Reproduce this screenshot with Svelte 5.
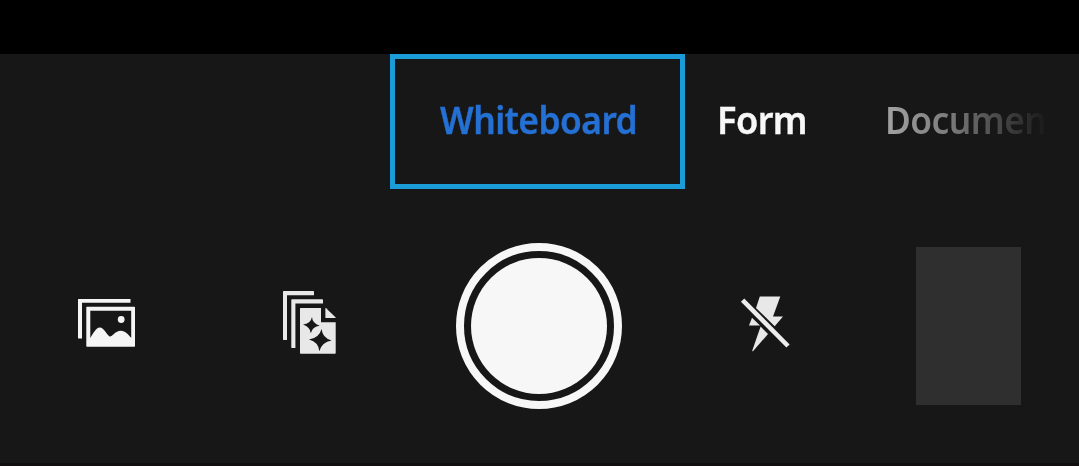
<script lang="ts">
    const modes = [
        { id: "whiteboard", label: "Whiteboard" },
        { id: "form", label: "Form" },
        { id: "document", label: "Documen" },
    ];

    let selected = $state("whiteboard");
</script>

<div class="camera">
    <div class="preview"></div>
    <nav class="modes">
        {#each modes as mode}
            <button
                class="mode {mode.id}"
                class:selected={selected === mode.id}
                onclick={() => (selected = mode.id)}
            >
                <span>{mode.label}</span>
            </button>
        {/each}
    </nav>
    <div class="controls">
        <button class="control" aria-label="Gallery">
            <svg width="58" height="70" viewBox="0 -8 58 70">
                <path d="M.5 0H52.5V3.7H4V39.5H.5Q0 39.5 0 39V.5Q0 0 .5 0Z" />
                <path
                    fill-rule="evenodd"
                    d="M9 7.7H56.3Q57 7.7 57 8.4V47Q57 47.7 56.3 47.7H9Q8.3 47.7 8.3 47V8.4Q8.3 7.7 9 7.7ZM12.3 11.7V39C15 35 18 28.6 21.8 28.6C26 28.6 29 36 31.5 37.5C34 38.3 37 31.7 42.8 31.7C47.5 31.7 50.5 36 53.2 38.7V11.7Z"
                />
                <circle cx="43.2" cy="20.5" r="3.4" />
            </svg>
        </button>
        <button class="control" aria-label="Auto capture">
            <svg class="soft" width="54" height="70" viewBox="0 0 54 70">
                <path d="M.7 0H30.3Q31 0 31 .7V4.2H4V49H.7Q0 49 0 48.3V.7Q0 0 .7 0Z" />
                <path d="M9 8.3H39.3Q40 8.3 40 9V12.6H12.4V57H9Q8.3 57 8.3 56.3V9Q8.3 8.3 9 8.3Z" />
                <path
                    fill-rule="evenodd"
                    d="M17.7 17H38V31.2H52.7V62Q52.7 62.7 52 62.7H17.7Q17 62.7 17 62V17.7Q17 17 17.7 17ZM29 26Q29.2 32 36.7 34.7Q29.5 35.2 27.8 42.3Q27.3 36 20 33.5Q27.6 33 29 26ZM38.6 38Q39.4 47 48.6 49.4Q38.8 51 36.3 60.2Q35.7 51 26 48.4Q36 47.2 38.6 38Z"
                />
                <path d="M42.4 17.4Q42.4 16.6 43.1 17.2L52.5 26.3Q53 27 52.3 27H43Q42.4 27 42.4 26.4Z" />
            </svg>
        </button>
        <button class="shutter" aria-label="Take photo"></button>
        <button class="control" aria-label="Flash off">
            <svg class="soft" width="50" height="60" viewBox="0 0 50 60">
                <path d="M19.8.4H40.3L33 20.5H43L34.7 30.3L16 12Z" />
                <path d="M12 21.7L20 29.5H9Z" />
                <path d="M20.6 30.5L28 38L13.2 55Q12.2 55.8 12.3 54.5Z" />
                <path class="slash" d="M2.6 4.2L48 50" />
            </svg>
        </button>
        <div class="thumbnail"></div>
    </div>
</div>

<style>
    :global(body) {
        margin: 0;
        background-color: #171717;
    }

    .camera {
        box-sizing: border-box;
        width: 1079px;
        height: 466px;
        overflow: hidden;
        background-color: #171717;
        border-bottom: 3px solid #120e10;
        font-family: "Noto Sans", "Open Sans", sans-serif;
    }

    button {
        padding: 0;
        border: none;
        background: none;
        font: inherit;
        color: inherit;
    }

    .preview {
        height: 54px;
        background-color: #000;
    }

    .modes {
        display: flex;
        height: 135px;
        padding-left: 390px;
    }

    .mode {
        box-sizing: border-box;
        display: flex;
        align-items: center;
        font-size: 37.5px;
        font-weight: 600;
        line-height: 50px;
        letter-spacing: -0.6px;
        white-space: nowrap;
        color: #f7f7f7;
        -webkit-text-stroke: 0.4px currentColor;
    }

    .mode span {
        padding-bottom: 4px;
        transform: scaleX(0.943);
        transform-origin: left;
    }

    .whiteboard {
        width: 295px;
        padding-left: 45px;
        border: 5px solid #1b9bd7;
    }

    .selected {
        color: #2470d4;
    }

    .form {
        width: 200px;
        padding-left: 32px;
    }

    .form span {
        transform: scaleX(0.965);
    }

    .document {
        width: 170px;
        -webkit-text-stroke: 0;
    }

    .document span {
        color: transparent;
        background: linear-gradient(90deg, #a3a3a3, #7b7b7b 40%, #3c3c3c 78%, #191919);
        background-clip: text;
    }

    .controls {
        display: grid;
        grid-template-columns: 205px 173px 284px 176px 105px;
        align-items: center;
        height: 166px;
        padding: 54px 0 0 78px;
    }

    .control {
        display: flex;
        fill: #f5f5f5;
    }

    .soft {
        fill: #e8e8e8;
    }

    .slash {
        stroke: #ededed;
        stroke-width: 4.6;
    }

    .shutter {
        box-sizing: border-box;
        width: 166px;
        height: 166px;
        border: 8px solid #f7f7f7;
        border-radius: 50%;
        padding: 7px;
        background: #f7f7f7 content-box;
    }

    .thumbnail {
        height: 158px;
        background-color: #2f2f2f;
    }
</style>
